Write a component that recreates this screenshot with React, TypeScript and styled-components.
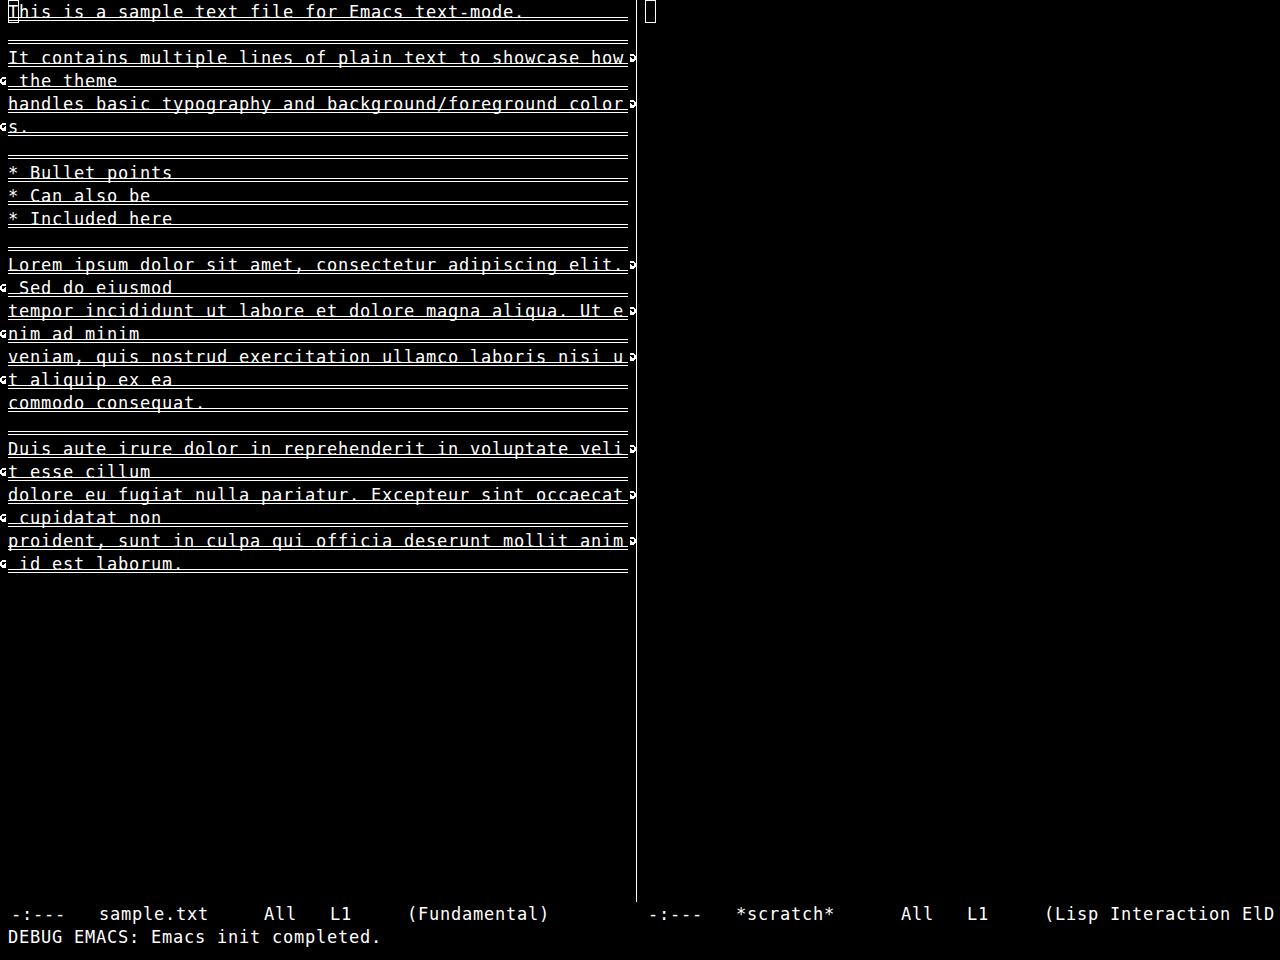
import React from "react";
import styled, { createGlobalStyle } from "styled-components";

const GlobalStyle = createGlobalStyle`
  html, body { margin: 0; padding: 0; background: #000; }
  body { width: 1280px; height: 960px; overflow: hidden; }
  * { box-sizing: border-box; }
`;

const CELL = 11;
const ROW = 23;

const Frame = styled.div`
  width: 1280px;
  height: 960px;
  background: #000;
  color: #fff;
  font-family: "DejaVu Sans Mono", monospace;
  font-size: 17px;
  letter-spacing: ${CELL - 17 * 0.60205}px;
  line-height: ${ROW}px;
  display: grid;
  grid-template-rows: 925px ${ROW}px 1fr;
`;

const Windows = styled.div`
  display: flex;
  min-height: 0;
`;

const Window = styled.div<{ $width?: number }>`
  display: flex;
  flex-direction: column;
  ${(p) => (p.$width ? `width: ${p.$width}px; flex: none;` : "flex: 1;")}
  min-width: 0;
`;

const Body = styled.div<{ $divider?: boolean }>`
  flex: 1;
  min-height: 0;
  overflow: hidden;
  border-right: ${(p) => (p.$divider ? "1px solid #fff" : "none")};
`;

const Row = styled.div`
  display: flex;
  height: ${ROW}px;
`;

const Fringe = styled.div`
  width: 8px;
  flex: none;
  display: flex;
  align-items: center;
  justify-content: center;
`;

const TextCell = styled.div<{ $lined?: boolean }>`
  position: relative;
  width: 620px;
  height: ${ROW}px;
  padding-top: 1px;
  flex: none;
  white-space: pre;
  overflow: hidden;
  background: ${(p) =>
    p.$lined
      ? `linear-gradient(to bottom,
          transparent 0, transparent 17px,
          #fff 17px, #fff 18px,
          transparent 18px, transparent 20px,
          #fff 20px, #fff 21px,
          transparent 21px)`
      : "none"};
`;

const Cursor = styled.div`
  position: absolute;
  left: 0;
  top: 0;
  width: ${CELL}px;
  height: ${ROW}px;
  border: 1px solid #fff;
`;

const ModeLine = styled.div`
  height: ${ROW}px;
  padding-top: 1px;
  white-space: pre;
  overflow: hidden;
  flex: none;
`;

const MiniBuffer = styled.div`
  padding: 1px 0 0 8px;
  white-space: pre;
`;

const RIGHT_ARROW = [
  "..####..",
  "..#####.",
  "......##",
  "..#...##",
  "..##..##",
  "..######",
  "..#####.",
  "..####..",
];
const LEFT_ARROW = RIGHT_ARROW.map((r) => r.split("").reverse().join(""));

function Bitmap({ bits }: { bits: string[] }) {
  const rects: React.ReactNode[] = [];
  bits.forEach((line, y) =>
    line.split("").forEach((c, x) => {
      if (c === "#") rects.push(<rect key={`${x}-${y}`} x={x} y={y} width={1} height={1} fill="#fff" />);
    })
  );
  return (
    <svg width={8} height={8} viewBox="0 0 8 8" shapeRendering="crispEdges">
      {rects}
    </svg>
  );
}

type Line = { text: string; wrapEnd?: boolean; wrapStart?: boolean };

const lines: Line[] = [
  { text: "This is a sample text file for Emacs text-mode." },
  { text: "" },
  { text: "It contains multiple lines of plain text to showcase how", wrapEnd: true },
  { text: " the theme", wrapStart: true },
  { text: "handles basic typography and background/foreground color", wrapEnd: true },
  { text: "s.", wrapStart: true },
  { text: "" },
  { text: "* Bullet points" },
  { text: "* Can also be" },
  { text: "* Included here" },
  { text: "" },
  { text: "Lorem ipsum dolor sit amet, consectetur adipiscing elit.", wrapEnd: true },
  { text: " Sed do eiusmod", wrapStart: true },
  { text: "tempor incididunt ut labore et dolore magna aliqua. Ut e", wrapEnd: true },
  { text: "nim ad minim", wrapStart: true },
  { text: "veniam, quis nostrud exercitation ullamco laboris nisi u", wrapEnd: true },
  { text: "t aliquip ex ea", wrapStart: true },
  { text: "commodo consequat." },
  { text: "" },
  { text: "Duis aute irure dolor in reprehenderit in voluptate veli", wrapEnd: true },
  { text: "t esse cillum", wrapStart: true },
  { text: "dolore eu fugiat nulla pariatur. Excepteur sint occaecat", wrapEnd: true },
  { text: " cupidatat non", wrapStart: true },
  { text: "proident, sunt in culpa qui officia deserunt mollit anim", wrapEnd: true },
  { text: " id est laborum.", wrapStart: true },
];

export default function App() {
  return (
    <>
      <GlobalStyle />
      <Frame>
        <Windows>
          <Window $width={637}>
            <Body $divider>
              {lines.map((l, i) => (
                <Row key={i}>
                  <Fringe>{l.wrapStart && <Bitmap bits={LEFT_ARROW} />}</Fringe>
                  <TextCell $lined>
                    {l.text}
                    {i === 0 && <Cursor />}
                  </TextCell>
                  <Fringe>{l.wrapEnd && <Bitmap bits={RIGHT_ARROW} />}</Fringe>
                </Row>
              ))}
            </Body>
            <ModeLine>{" -:---   sample.txt     All   L1     (Fundamental)"}</ModeLine>
          </Window>
          <Window>
            <Body>
              <Row>
                <Fringe />
                <TextCell>
                  <Cursor />
                </TextCell>
              </Row>
            </Body>
            <ModeLine>{" -:---   *scratch*      All   L1     (Lisp Interaction ElD"}</ModeLine>
          </Window>
        </Windows>
        <MiniBuffer>DEBUG EMACS: Emacs init completed.</MiniBuffer>
      </Frame>
    </>
  );
}
